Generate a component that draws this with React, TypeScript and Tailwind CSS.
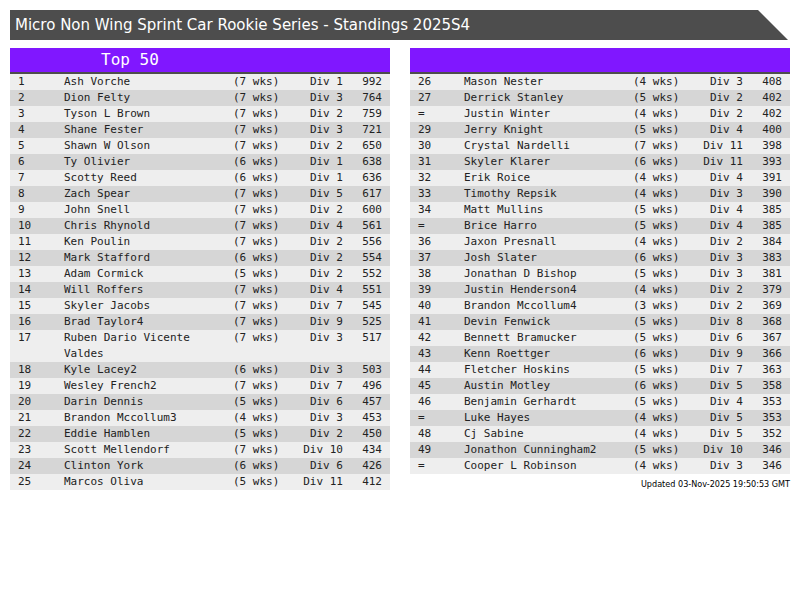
import React from "react";

type Row = [string, string, string, string, string];

const left: Row[] = [
  ["1", "Ash Vorche", "(7 wks)", "Div 1", "992"],
  ["2", "Dion Felty", "(7 wks)", "Div 3", "764"],
  ["3", "Tyson L Brown", "(7 wks)", "Div 2", "759"],
  ["4", "Shane Fester", "(7 wks)", "Div 3", "721"],
  ["5", "Shawn W Olson", "(7 wks)", "Div 2", "650"],
  ["6", "Ty Olivier", "(6 wks)", "Div 1", "638"],
  ["7", "Scotty Reed", "(6 wks)", "Div 1", "636"],
  ["8", "Zach Spear", "(7 wks)", "Div 5", "617"],
  ["9", "John Snell", "(7 wks)", "Div 2", "600"],
  ["10", "Chris Rhynold", "(7 wks)", "Div 4", "561"],
  ["11", "Ken Poulin", "(7 wks)", "Div 2", "556"],
  ["12", "Mark Stafford", "(6 wks)", "Div 2", "554"],
  ["13", "Adam Cormick", "(5 wks)", "Div 2", "552"],
  ["14", "Will Roffers", "(7 wks)", "Div 4", "551"],
  ["15", "Skyler Jacobs", "(7 wks)", "Div 7", "545"],
  ["16", "Brad Taylor4", "(7 wks)", "Div 9", "525"],
  ["17", "Ruben Dario Vicente Valdes", "(7 wks)", "Div 3", "517"],
  ["18", "Kyle Lacey2", "(6 wks)", "Div 3", "503"],
  ["19", "Wesley French2", "(7 wks)", "Div 7", "496"],
  ["20", "Darin Dennis", "(5 wks)", "Div 6", "457"],
  ["21", "Brandon Mccollum3", "(4 wks)", "Div 3", "453"],
  ["22", "Eddie Hamblen", "(5 wks)", "Div 2", "450"],
  ["23", "Scott Mellendorf", "(7 wks)", "Div 10", "434"],
  ["24", "Clinton York", "(6 wks)", "Div 6", "426"],
  ["25", "Marcos Oliva", "(5 wks)", "Div 11", "412"],
];

const right: Row[] = [
  ["26", "Mason Nester", "(4 wks)", "Div 3", "408"],
  ["27", "Derrick Stanley", "(5 wks)", "Div 2", "402"],
  ["=", "Justin Winter", "(4 wks)", "Div 2", "402"],
  ["29", "Jerry Knight", "(5 wks)", "Div 4", "400"],
  ["30", "Crystal Nardelli", "(7 wks)", "Div 11", "398"],
  ["31", "Skyler Klarer", "(6 wks)", "Div 11", "393"],
  ["32", "Erik Roice", "(4 wks)", "Div 4", "391"],
  ["33", "Timothy Repsik", "(4 wks)", "Div 3", "390"],
  ["34", "Matt Mullins", "(5 wks)", "Div 4", "385"],
  ["=", "Brice Harro", "(5 wks)", "Div 4", "385"],
  ["36", "Jaxon Presnall", "(4 wks)", "Div 2", "384"],
  ["37", "Josh Slater", "(6 wks)", "Div 3", "383"],
  ["38", "Jonathan D Bishop", "(5 wks)", "Div 3", "381"],
  ["39", "Justin Henderson4", "(4 wks)", "Div 2", "379"],
  ["40", "Brandon Mccollum4", "(3 wks)", "Div 2", "369"],
  ["41", "Devin Fenwick", "(5 wks)", "Div 8", "368"],
  ["42", "Bennett Bramucker", "(5 wks)", "Div 6", "367"],
  ["43", "Kenn Roettger", "(6 wks)", "Div 9", "366"],
  ["44", "Fletcher Hoskins", "(5 wks)", "Div 7", "363"],
  ["45", "Austin Motley", "(6 wks)", "Div 5", "358"],
  ["46", "Benjamin Gerhardt", "(5 wks)", "Div 4", "353"],
  ["=", "Luke Hayes", "(4 wks)", "Div 5", "353"],
  ["48", "Cj Sabine", "(4 wks)", "Div 5", "352"],
  ["49", "Jonathon Cunningham2", "(5 wks)", "Div 10", "346"],
  ["=", "Cooper L Robinson", "(4 wks)", "Div 3", "346"],
];

function Table({ rows, title }: { rows: Row[]; title: string }) {
  return (
    <div className="w-[380px]">
      <div className="h-[26px] bg-[#8017ff] border-b-2 border-[#4d4d4d] text-white text-[16px] leading-[24px] pl-[91px] font-['DejaVu_Sans_Mono',monospace]">
        {title}
      </div>
      <div className="font-['DejaVu_Sans_Mono',monospace] text-[11px] leading-[16px] text-[#222]">
        {rows.map((r, i) => (
          <div
            key={i}
            className={`grid grid-cols-[46px_169px_60px_50px_1fr] px-2 ${
              i % 2 === 0 ? "bg-[#eeeeee]" : "bg-[#d6d6d6]"
            }`}
          >
            <div>{r[0]}</div>
            <div>{r[1]}</div>
            <div className="whitespace-pre">{r[2]}</div>
            <div className="text-right whitespace-pre">{r[3]}</div>
            <div className="text-right">{r[4]}</div>
          </div>
        ))}
      </div>
    </div>
  );
}

export default function App() {
  return (
    <div className="w-[800px] h-[600px] bg-white pt-[10px] pl-[10px]">
      <div className="w-[778px] h-[30px] bg-[#4d4d4d] text-white text-[15px] leading-[30px] pl-[5px] font-['DejaVu_Sans',sans-serif] [clip-path:polygon(0_0,calc(100%-30px)_0,100%_100%,0_100%)]">
        Micro Non Wing Sprint Car Rookie Series - Standings 2025S4
      </div>
      <div className="flex gap-5 mt-2 items-start">
        <Table rows={left} title="Top 50" />
        <div className="flex flex-col">
          <Table rows={right} title="" />
          <div className="text-right text-[9px] leading-[12px] mt-[4px] text-black font-['DejaVu_Sans_Condensed',sans-serif] [font-stretch:condensed]">
            Updated 03-Nov-2025 19:50:53 GMT
          </div>
        </div>
      </div>
    </div>
  );
}
